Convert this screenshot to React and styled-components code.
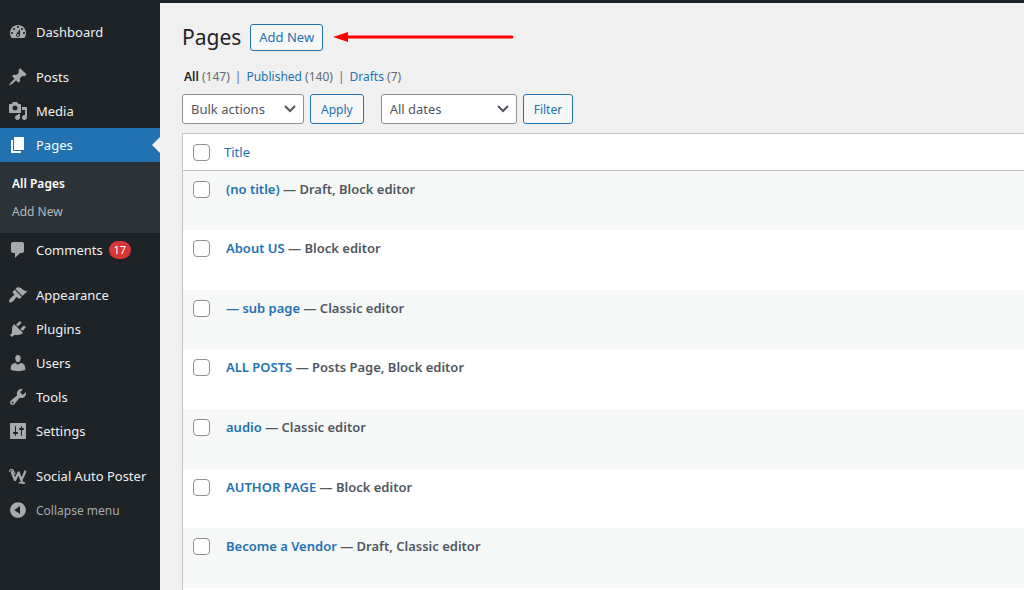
import React from "react";
import styled, { createGlobalStyle } from "styled-components";

const GlobalStyle = createGlobalStyle`
  * {
    box-sizing: border-box;
  }
  body {
    margin: 0;
    background: #f0f0f1;
    color: #50575e;
    font-family: "Noto Sans", "Open Sans", sans-serif;
    font-size: 13px;
    line-height: 18px;
  }
  button,
  select {
    font-family: inherit;
    font-size: 13px;
  }
`;

const Page = styled.div`
  display: flex;
  flex-direction: column;
  min-height: 100vh;
`;
const AdminBar = styled.div`
  height: 3px;
  background: #1d2327;
`;
const Columns = styled.div`
  display: flex;
  flex: 1;
`;

/* Sidebar */
const Sidebar = styled.nav`
  flex: none;
  width: 160px;
  padding-top: 12px;
  background: #1d2327;
`;
const MenuGroup = styled.ul`
  list-style: none;
  margin: 0 0 11px;
  padding: 0;
`;
const MenuLink = styled.a`
  display: flex;
  align-items: center;
  height: 34px;
  padding-left: 8px;
  gap: 8px;
  position: relative;
  color: ${props => (props.$current ? "#fff" : "#f0f0f1")};
  background: ${props => (props.$current ? "#2271b1" : "transparent")};
  text-decoration: none;

  &::after {
    content: "";
    display: ${props => (props.$current ? "block" : "none")};
    position: absolute;
    right: 0;
    top: 9px;
    border: 8px solid transparent;
    border-right-color: #f0f0f1;
    border-left: 0;
  }
`;
const CollapseButton = styled.button`
  display: flex;
  align-items: center;
  width: 100%;
  height: 34px;
  padding: 0 0 0 8px;
  gap: 8px;
  border: 0;
  background: none;
  color: #a7aaad;
  font-size: 12px;
  cursor: pointer;
`;
const Icon = styled.svg`
  flex: none;
  width: 20px;
  height: 20px;
  fill: ${props => (props.$current ? "#fff" : "#a7aaad")};
  fill-rule: evenodd;
`;
const Badge = styled.span`
  min-width: 22px;
  height: 18px;
  margin-left: -2px;
  border-radius: 9px;
  background: #d63638;
  color: #fff;
  font-size: 11px;
  text-align: center;
`;
const Submenu = styled.ul`
  list-style: none;
  margin: 0;
  padding: 8px 0 7px;
  background: #2c3338;
`;
const SubmenuLink = styled.a`
  display: block;
  padding: 5px 12px;
  color: ${props => (props.$current ? "#fff" : "#b4b9be")};
  font-size: 12px;
  font-weight: ${props => (props.$current ? 600 : 400)};
  text-decoration: none;
`;

/* Content */
const Main = styled.main`
  display: flex;
  flex: 1;
  flex-direction: column;
  min-width: 0;
  padding: 19px 0 0 22px;
`;
const Heading = styled.header`
  display: flex;
  align-items: center;
  height: 30px;
  gap: 9px;
`;
const Title = styled.h1`
  margin: 0;
  color: #1d2327;
  font-size: 21px;
  font-weight: 400;
  line-height: 30px;
`;
const Button = styled.button`
  height: ${props => (props.$small ? 27 : 30)}px;
  padding: 0 ${props => (props.$small ? 8 : 10)}px;
  border: 1px solid #2271b1;
  border-radius: 3px;
  background: #f6f7f7;
  color: #2271b1;
  font-size: ${props => (props.$small ? 13 : 12)}px;
  cursor: pointer;
`;
const Arrow = styled.svg`
  width: 182px;
  height: 12px;
`;
const Views = styled.ul`
  display: flex;
  list-style: none;
  margin: 16px 0 8px;
  padding: 0 2px;
  font-size: 12px;
`;
const View = styled.li`
  color: #646970;

  & + &::before {
    content: "|";
    margin: 0 5px;
  }
`;
const ViewLink = styled.a`
  color: ${props => (props.$current ? "#1d2327" : "#2271b1")};
  font-weight: ${props => (props.$current ? 600 : 400)};
  text-decoration: none;
`;
const Filters = styled.form`
  display: flex;
  gap: 17px;
  margin-bottom: 9px;
`;
const FilterGroup = styled.div`
  display: flex;
  gap: 6px;
`;
const SelectBox = styled.label`
  display: block;
  position: relative;
  width: ${props => props.$width}px;
`;
const Select = styled.select`
  appearance: none;
  width: 100%;
  height: 30px;
  padding: 0 24px 0 8px;
  border: 1px solid #8c8f94;
  border-radius: 3px;
  background: #fff;
  color: #50575e;
`;
const Chevron = styled.svg`
  position: absolute;
  right: 6px;
  top: 7px;
  width: 16px;
  height: 16px;
  fill: none;
  stroke: #50575e;
  stroke-width: 2;
  pointer-events: none;
`;
const ListPanel = styled.section`
  flex: 1;
  border: 1px solid #c3c4c7;
  border-width: 1px 0 0 1px;
  background: #fff;
`;
const Table = styled.table`
  width: 100%;
  border-collapse: collapse;
`;
const Row = styled.tr`
  height: 60px;
  background: #fff;

  &:nth-child(odd) {
    background: #f6f7f7;
  }
  &:nth-child(3n) {
    height: 59px;
  }
`;
const HeadCell = styled.th`
  height: 36px;
  padding: 0;
  padding-left: ${props => (props.$check ? 10 : 0)}px;
  width: ${props => (props.$check ? "41px" : "auto")};
  border-bottom: 1px solid #c3c4c7;
  font-weight: 400;
  text-align: left;
`;
const Cell = styled.td`
  padding: 9px 0 0;
  padding-left: ${props => (props.$check ? 10 : 2)}px;
  vertical-align: top;
  font-weight: 600;
`;
const TitleLink = styled.a`
  color: #2271b1;
  text-decoration: none;
`;
const Checkbox = styled.input`
  appearance: none;
  display: block;
  width: 17px;
  height: 17px;
  margin: 1px 0 0;
  border: 1px solid #8c8f94;
  border-radius: 4px;
  background: #fff;
`;

const icons = {
  dashboard:
    "M3.76 16h12.48c1.1-1.37 1.76-3.11 1.76-5 0-4.42-3.58-8-8-8s-8 3.58-8 8c0 1.89.66 3.63 1.76 5zM10 4c.55 0 1 .45 1 1s-.45 1-1 1-1-.45-1-1 .45-1 1-1zM6 6c.55 0 1 .45 1 1s-.45 1-1 1-1-.45-1-1 .45-1 1-1zm8 0c.55 0 1 .45 1 1s-.45 1-1 1-1-.45-1-1 .45-1 1-1zm-5.37 5.55L12 7v6c0 1.1-.9 2-2 2s-2-.9-2-2c0-.57.24-1.08.63-1.45zM4 10c.55 0 1 .45 1 1s-.45 1-1 1-1-.45-1-1 .45-1 1-1zm12 0c.55 0 1 .45 1 1s-.45 1-1 1-1-.45-1-1 .45-1 1-1zm-5 3c0-.55-.45-1-1-1s-1 .45-1 1 .45 1 1 1 1-.45 1-1z",
  posts:
    "M10.44 3.02l1.82-1.82 6.36 6.35-1.83 1.82c-1.05-.68-2.48-.57-3.41.36l-.75.75c-.92.93-1.04 2.35-.35 3.41l-1.83 1.82-2.41-2.41-2.8 2.79c-.42.42-3.38 2.71-3.8 2.29s1.86-3.39 2.28-3.81l2.79-2.79L4.1 9.36l1.83-1.82c1.05.69 2.48.57 3.4-.36l.75-.75c.93-.92 1.05-2.35.36-3.41z",
  media:
    "M13 11V4c0-.55-.45-1-1-1h-1.67L9 1H5L3.67 3H2c-.55 0-1 .45-1 1v7c0 .55.45 1 1 1h10c.55 0 1-.45 1-1zM7 4.500c1.380 0 2.500 1.120 2.500 2.500S8.380 9.500 7 9.500 4.500 8.380 4.500 7 5.620 4.500 7 4.500zM14 6h5v10.500c0 1.380-1.120 2.500-2.500 2.500S14 17.880 14 16.500s1.120-2.500 2.500-2.500c.17 0 .34.02.5.05V9h-3V6zm-4 8.050V13h2v3.500c0 1.380-1.120 2.500-2.500 2.500S7 17.880 7 16.500 8.120 14 9.500 14c.17 0 .34.02.5.05z",
  pages: "M6 15V2h10v13H6zm-1 1h8v2H3V5h2v11z",
  comments:
    "M5 2h9c1.1 0 2 .9 2 2v7c0 1.1-.9 2-2 2h-2l-5 5v-5H5c-1.1 0-2-.9-2-2V4c0-1.1.9-2 2-2z",
  appearance:
    "M14.48 11.06L7.41 3.99l1.5-1.5c.5-.56 2.3-.47 3.51.32 1.21.8 1.43 1.28 2.91 2.1 1.18.64 2.45 1.26 4.45.85zm-.71.71L6.7 4.7 4.93 6.47c-.39.39-.39 1.02 0 1.41l1.06 1.06c.39.39.39 1.03 0 1.42-.6.6-1.43 1.11-2.21 1.69-.35.26-.7.53-1.01.84C1.43 14.23.4 16.08 1.4 17.07c.99 1 2.84-.03 4.18-1.36.31-.31.58-.66.85-1.02.57-.78 1.08-1.61 1.69-2.21.39-.39 1.02-.39 1.41 0l1.06 1.06c.39.39 1.02.39 1.41 0z",
  plugins:
    "M13.11 4.36L9.87 7.6 8 5.73l3.24-3.24c.35-.34 1.05-.2 1.56.32.52.51.66 1.21.31 1.55zm-8 1.77l.91-1.12 9.01 9.01-1.19.84c-.71.71-2.63 1.16-3.82 1.16H6.14L4.9 17.26c-.59.59-1.54.59-2.12 0-.59-.58-.59-1.53 0-2.12l1.24-1.24v-3.88c0-1.13.4-3.19 1.09-3.89zm7.26 3.97l3.24-3.24c.34-.35 1.04-.21 1.55.31.52.51.66 1.21.31 1.55l-3.24 3.25z",
  users:
    "M10 9.25c-2.27 0-2.73-3.44-2.73-3.44C7 4.02 7.82 2 9.97 2c2.16 0 2.98 2.02 2.71 3.81 0 0-.41 3.44-2.68 3.44zm0 2.57L12.72 10c2.39 0 4.52 2.33 4.52 4.53v2.49s-3.65 1.13-7.24 1.13c-3.65 0-7.24-1.13-7.24-1.13v-2.49c0-2.25 1.94-4.48 4.47-4.48z",
  tools:
    "M16.68 9.77c-1.34 1.34-3.3 1.67-4.95.99l-5.41 6.52c-.99.99-2.59.99-3.58 0s-.99-2.59 0-3.57l6.52-5.42c-.68-1.65-.35-3.61.99-4.95 1.28-1.28 3.12-1.62 4.72-1.06l-2.89 2.89 2.82 2.82 2.86-2.87c.53 1.58.18 3.39-1.08 4.65zM3.81 16.21c.4.39 1.04.39 1.43 0 .4-.4.4-1.04 0-1.43-.39-.4-1.03-.4-1.43 0-.39.39-.39 1.03 0 1.43z",
  settings:
    "M18 17V3c0-.55-.45-1-1-1H3c-.55 0-1 .45-1 1v14c0 .55.45 1 1 1h14c.55 0 1-.45 1-1zM8 11h1c.55 0 1 .45 1 1s-.45 1-1 1H8v1.5c0 .28-.22.5-.5.5s-.5-.22-.5-.5V13H6c-.55 0-1-.45-1-1s.45-1 1-1h1V5.5c0-.28.22-.5.5-.5s.5.22.5.5V11zm5-2h-1c-.55 0-1-.45-1-1s.45-1 1-1h1V5.5c0-.28.22-.5.5-.5s.5.22.5.5V7h1c.55 0 1 .45 1 1s-.45 1-1 1h-1v5.5c0 .28-.22.5-.5.5s-.5-.22-.5-.5V9z",
  collapse:
    "M10 2.160c4.330 0 7.840 3.510 7.840 7.840s-3.510 7.840-7.840 7.840S2.160 14.330 2.160 10 5.710 2.160 10 2.160zm2 11.720V6.120L6.180 9.970z"
};

const menu = [
  [{ label: "Dashboard", icon: "dashboard" }],
  [
    { label: "Posts", icon: "posts" },
    { label: "Media", icon: "media" },
    {
      label: "Pages",
      icon: "pages",
      current: true,
      children: ["All Pages", "Add New"]
    },
    { label: "Comments", icon: "comments", count: 17 }
  ],
  [
    { label: "Appearance", icon: "appearance" },
    { label: "Plugins", icon: "plugins" },
    { label: "Users", icon: "users" },
    { label: "Tools", icon: "tools" },
    { label: "Settings", icon: "settings" }
  ]
];

const pages = [
  { title: "(no title)", state: "Draft, Block editor" },
  { title: "About US", state: "Block editor" },
  { title: "— sub page", state: "Classic editor" },
  { title: "ALL POSTS", state: "Posts Page, Block editor" },
  { title: "audio", state: "Classic editor" },
  { title: "AUTHOR PAGE", state: "Block editor" },
  { title: "Become a Vendor", state: "Draft, Classic editor" }
];

const MenuIcon = ({ name, current }) => (
  <Icon viewBox="0 0 20 20" $current={current} aria-hidden="true">
    <path d={icons[name]} />
  </Icon>
);

const PosterLogo = () => (
  <Icon viewBox="0 0 20 20" aria-hidden="true">
    <g
      fill="none"
      stroke="#a7aaad"
      strokeLinecap="round"
      strokeLinejoin="round"
    >
      <path strokeWidth="1.3" d="M1.500 5.200c0-2 2.800-2.400 4-.2l1.500 3" />
      <path
        strokeWidth="2.3"
        d="M3.800 6l3.200 8 3.700-7.500 2.500 7.500c1.300-2 2.800-5 4-8.500"
      />
      <path strokeWidth="1.600" d="M13 14l2 2.500M11.500 16.800c1.800-.8 3 1.300 5 .2" />
    </g>
  </Icon>
);

const MenuItem = ({ item }) => (
  <li>
    <MenuLink href="#" $current={item.current}>
      <MenuIcon name={item.icon} current={item.current} />
      {item.label}
      {item.count && <Badge>{item.count}</Badge>}
    </MenuLink>
    {item.children && (
      <Submenu>
        {item.children.map((label, i) => (
          <li key={label}>
            <SubmenuLink href="#" $current={i === 0}>
              {label}
            </SubmenuLink>
          </li>
        ))}
      </Submenu>
    )}
  </li>
);

const Dropdown = ({ label, option, width }) => (
  <SelectBox $width={width}>
    <Select aria-label={label}>
      <option>{option}</option>
    </Select>
    <Chevron viewBox="0 0 16 16" aria-hidden="true">
      <path d="M3 5l5 5 5-5" />
    </Chevron>
  </SelectBox>
);

const AdminMenu = () => (
  <Sidebar>
    {menu.map(group => (
      <MenuGroup key={group[0].label}>
        {group.map(item => (
          <MenuItem key={item.label} item={item} />
        ))}
      </MenuGroup>
    ))}
    <MenuGroup>
      <li>
        <MenuLink href="#">
          <PosterLogo />
          Social Auto Poster
        </MenuLink>
      </li>
      <li>
        <CollapseButton type="button">
          <MenuIcon name="collapse" />
          Collapse menu
        </CollapseButton>
      </li>
    </MenuGroup>
  </Sidebar>
);

const PagesTable = () => (
  <ListPanel>
    <Table>
      <thead>
        <tr>
          <HeadCell $check>
            <Checkbox type="checkbox" aria-label="Select all" />
          </HeadCell>
          <HeadCell>
            <TitleLink href="#">Title</TitleLink>
          </HeadCell>
        </tr>
      </thead>
      <tbody>
        {pages.map(page => (
          <Row key={page.title}>
            <Cell $check>
              <Checkbox type="checkbox" aria-label={`Select ${page.title}`} />
            </Cell>
            <Cell>
              <TitleLink href="#">{page.title}</TitleLink> — {page.state}
            </Cell>
          </Row>
        ))}
      </tbody>
    </Table>
  </ListPanel>
);

const App = () => {
  return (
    <Page>
      <GlobalStyle />
      <AdminBar />
      <Columns>
        <AdminMenu />
        <Main>
          <Heading>
            <Title>Pages</Title>
            <Button type="button" $small>
              Add New
            </Button>
            <Arrow viewBox="0 0 182 12" aria-hidden="true">
              <path d="M1 6L16 1v10z" fill="#f00" />
              <path
                d="M14 6h166"
                stroke="#f00"
                strokeWidth="3"
                strokeLinecap="round"
              />
            </Arrow>
          </Heading>
          <Views>
            <View>
              <ViewLink href="#" $current>
                All
              </ViewLink>{" "}
              (147)
            </View>
            <View>
              <ViewLink href="#">Published</ViewLink> (140)
            </View>
            <View>
              <ViewLink href="#">Drafts</ViewLink> (7)
            </View>
          </Views>
          <Filters>
            <FilterGroup>
              <Dropdown
                label="Select bulk action"
                option="Bulk actions"
                width={122}
              />
              <Button type="button">Apply</Button>
            </FilterGroup>
            <FilterGroup>
              <Dropdown
                label="Filter by date"
                option="All dates"
                width={136}
              />
              <Button type="button">Filter</Button>
            </FilterGroup>
          </Filters>
          <PagesTable />
        </Main>
      </Columns>
    </Page>
  );
};

export default App;
